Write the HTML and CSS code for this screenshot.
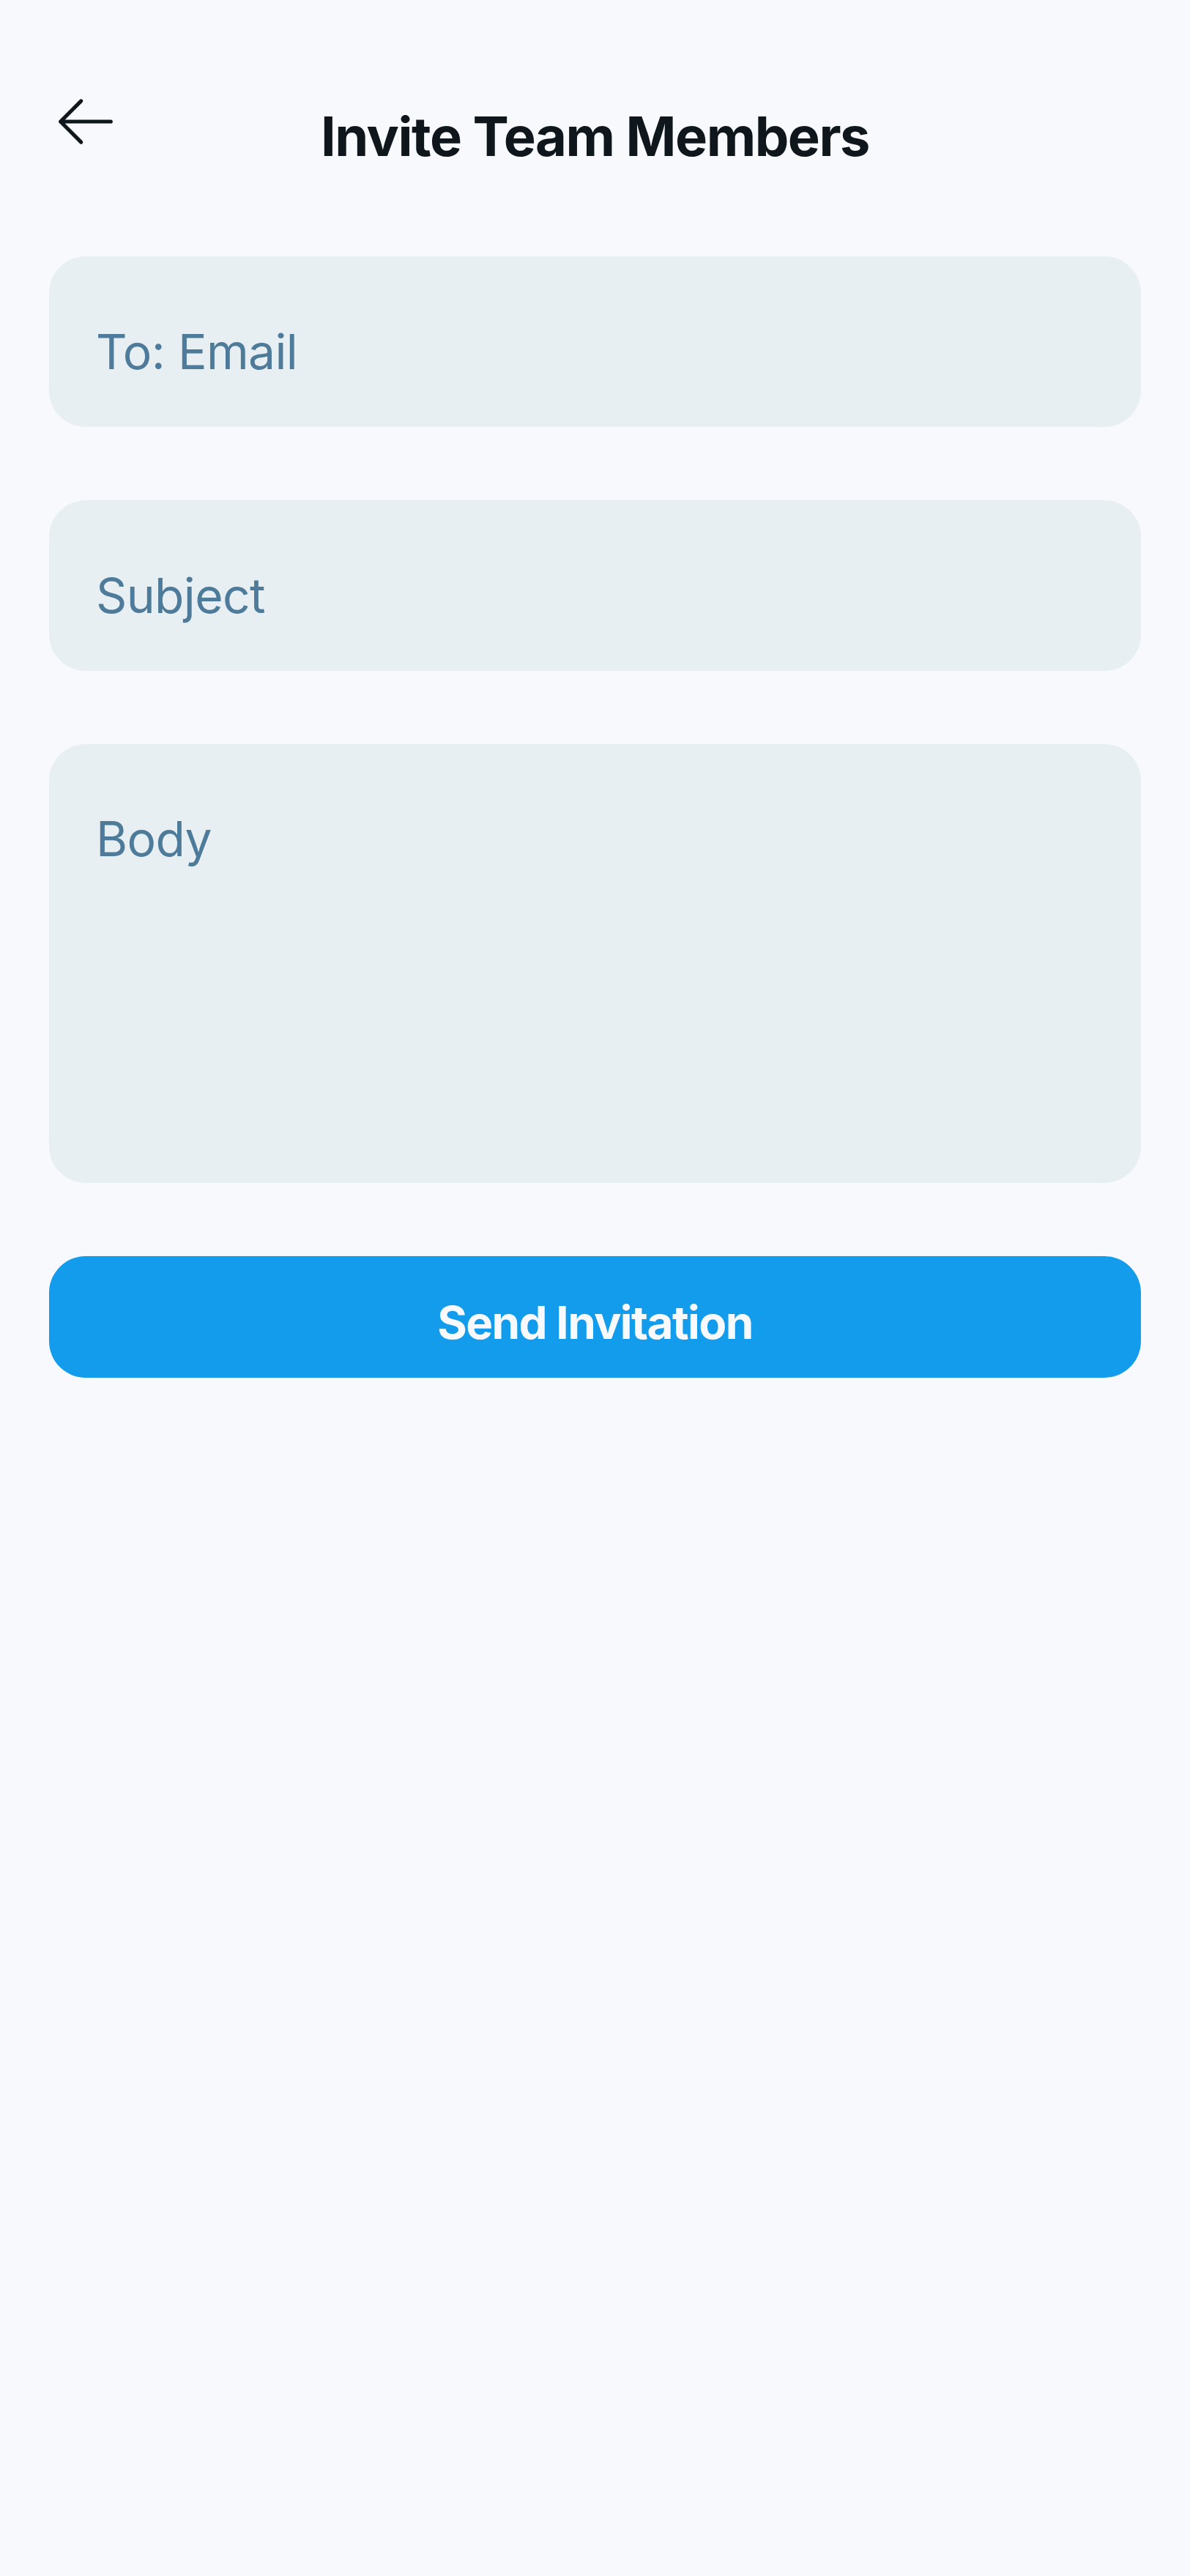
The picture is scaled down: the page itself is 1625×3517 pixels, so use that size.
FILE: index.html
```html
<!DOCTYPE html>
<html lang="en">
<head>
<meta charset="utf-8">
<title>Invite Team Members</title>
<link rel="stylesheet" href="styles.css">
</head>
<body>
<div class="screen">
  <header class="header">
    <button class="back" aria-label="Back">
      <svg viewBox="0 0 256 256" width="100" height="100" aria-hidden="true">
        <path d="M216 128H40M112 56L40 128L112 200" fill="none" stroke="#0f161c" stroke-width="13" stroke-linecap="round" stroke-linejoin="round"/>
      </svg>
    </button>
    <h1 class="title">Invite Team Members</h1>
  </header>
  <form class="form">
    <div class="field"><input class="input" type="email" placeholder="To: Email"></div>
    <div class="field"><input class="input" type="text" placeholder="Subject"></div>
    <div class="field"><textarea class="textarea" placeholder="Body"></textarea></div>
    <div class="field"><button type="button" class="send">Send Invitation</button></div>
  </form>
</div>
</body>
</html>
```
FILE: styles.css
```css
* { box-sizing: border-box; }
html, body { margin: 0; padding: 0; }
body {
  background: #f7f9fc;
  font-family: Inter, "Noto Sans", "Liberation Sans", sans-serif;
  color: #0f161c;
  min-height: 3517px;
}
.screen { display: flex; flex-direction: column; }
.header {
  display: flex;
  align-items: flex-start;
  padding: 116px 67px 0 67px;
  height: 300px;
}
.back {
  width: 100px;
  height: 100px;
  padding: 0;
  border: 0;
  background: transparent;
  display: flex;
  align-items: center;
  justify-content: center;
  flex: none;
}
.title {
  flex: 1;
  margin: 0;
  padding: 20px 100px 0 0;
  text-align: center;
  font-size: 74px;
  line-height: 100px;
  font-weight: 700;
  letter-spacing: -0.02em;
  color: #0f161c;
}
.form {
  display: flex;
  flex-direction: column;
  gap: 100px;
  padding: 50px 67px 0 67px;
}
.field { display: flex; }
.input, .textarea {
  width: 100%;
  border: 0;
  outline: 0;
  background: #e7eff2;
  border-radius: 50px;
  font-family: Inter, "Noto Sans", "Liberation Sans", sans-serif;
  font-size: 66px;
  letter-spacing: -0.01em;
  color: #0f161c;
}
.input {
  height: 233px;
  padding: 26px 64px 0 64px;
}
.textarea {
  height: 599px;
  padding: 89px 64px 64px 64px;
  resize: none;
  line-height: normal;
}
.input::placeholder, .textarea::placeholder { color: #4e7b99; opacity: 1; }
.send {
  width: 100%;
  height: 166px;
  border: 0;
  border-radius: 50px;
  background: #129ceb;
  color: #f7f9fc;
  font-family: Inter, "Noto Sans", "Liberation Sans", sans-serif;
  font-size: 62px;
  font-weight: 700;
  letter-spacing: -0.025em;
  padding: 14px 0 0 0;
}
```
